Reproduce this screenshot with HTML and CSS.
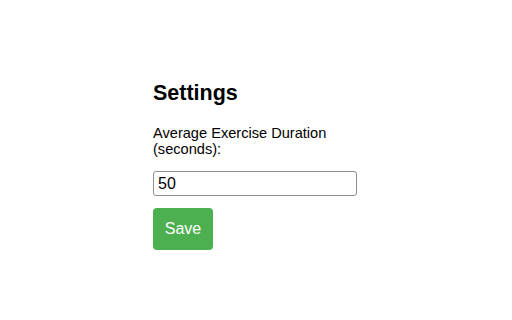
FILE: index.html
```html
<!DOCTYPE html>
<html>
<head>
<meta charset="utf-8">
<link rel="stylesheet" href="styles.css">
</head>
<body>
<div class="settings">
  <h2 class="title">Settings</h2>
  <label class="field-label" for="duration">Average Exercise Duration (seconds):</label>
  <input class="field-input" id="duration" type="number" value="50">
  <button class="save-btn">Save</button>
</div>
</body>
</html>
```
FILE: styles.css
```css
html, body {
  margin: 0;
  background: #ffffff;
}
body {
  font-family: "Liberation Sans", Arial, sans-serif;
  color: #000;
  padding: 81px 0 0 153px;
}
.settings {
  width: 204px;
  display: flex;
  flex-direction: column;
  align-items: flex-start;
}
.title {
  font-size: 21.5px;
  font-weight: bold;
  line-height: 24px;
  margin: 0 0 20px 0;
}
.field-label {
  display: block;
  font-size: 14.6px;
  line-height: 16px;
  margin: 0 0 14px 0;
}
.field-input {
  box-sizing: border-box;
  width: 204px;
  height: 25px;
  padding: 2px 4px;
  font-family: "Liberation Sans", Arial, sans-serif;
  font-size: 16px;
  color: #000;
  border: 1px solid #8f8f8f;
  border-radius: 3px;
  margin: 0 0 12px 0;
  -moz-appearance: textfield;
}
.field-input::-webkit-outer-spin-button,
.field-input::-webkit-inner-spin-button {
  -webkit-appearance: none;
  margin: 0;
}
.save-btn {
  box-sizing: border-box;
  height: 42px;
  width: 60px;
  padding: 0;
  background: #4caf50;
  color: #fff;
  border: none;
  border-radius: 4px;
  font-family: "Liberation Sans", Arial, sans-serif;
  font-size: 16px;
}
```
